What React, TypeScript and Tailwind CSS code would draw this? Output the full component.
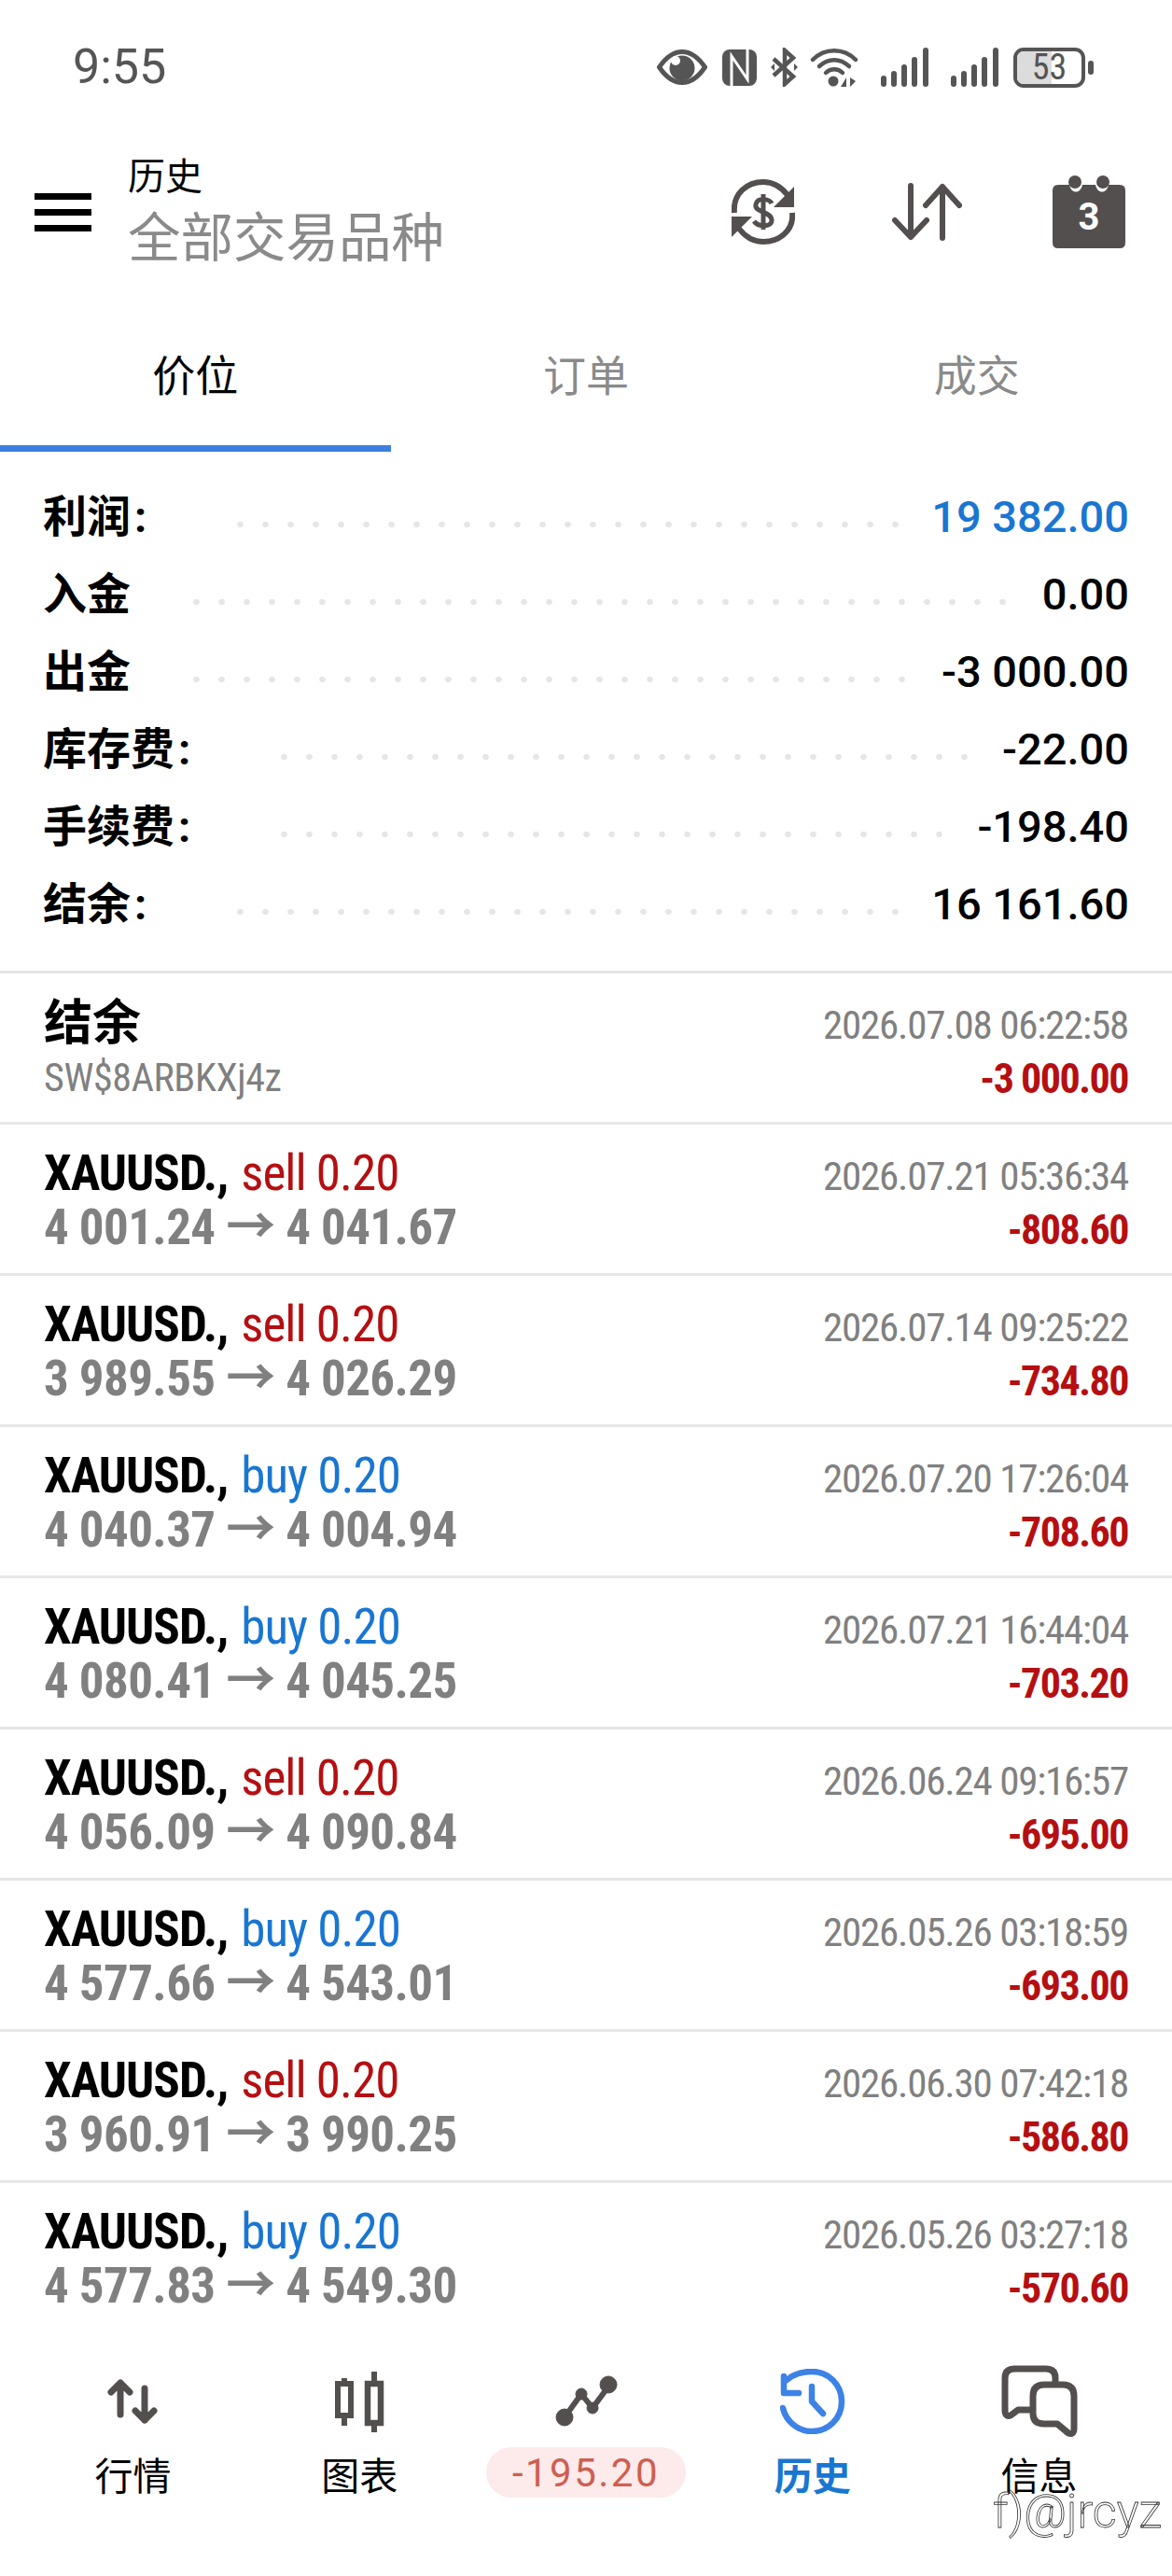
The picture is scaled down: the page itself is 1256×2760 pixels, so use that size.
import React from "react";

const cjk = "font-['Roboto','Noto_Sans_CJK_SC',sans-serif]";

const summary = [
  { l: "利润", colon: true, v: "19 382.00", c: "text-[#1976d2]", lw: "w-[198px]", dw: "w-[729px]" },
  { l: "入金", colon: false, v: "0.00", c: "text-black", lw: "w-[151px]", dw: "w-[891px]" },
  { l: "出金", colon: false, v: "-3 000.00", c: "text-black", lw: "w-[151px]", dw: "w-[783px]" },
  { l: "库存费", colon: true, v: "-22.00", c: "text-black", lw: "w-[245px]", dw: "w-[756px]" },
  { l: "手续费", colon: true, v: "-198.40", c: "text-black", lw: "w-[245px]", dw: "w-[729px]" },
  { l: "结余", colon: true, v: "16 161.60", c: "text-black", lw: "w-[198px]", dw: "w-[729px]" },
];

const trades = [
  ["sell", "4 001.24", "4 041.67", "2026.07.21 05:36:34", "-808.60"],
  ["sell", "3 989.55", "4 026.29", "2026.07.14 09:25:22", "-734.80"],
  ["buy", "4 040.37", "4 004.94", "2026.07.20 17:26:04", "-708.60"],
  ["buy", "4 080.41", "4 045.25", "2026.07.21 16:44:04", "-703.20"],
  ["sell", "4 056.09", "4 090.84", "2026.06.24 09:16:57", "-695.00"],
  ["buy", "4 577.66", "4 543.01", "2026.05.26 03:18:59", "-693.00"],
  ["sell", "3 960.91", "3 990.25", "2026.06.30 07:42:18", "-586.80"],
  ["buy", "4 577.83", "4 549.30", "2026.05.26 03:27:18", "-570.60"],
];

function Bars() {
  return (
    <svg width="52" height="42" viewBox="0 0 52 42" fill="#555">
      <rect x="0" y="30" width="6" height="12" rx="3" />
      <rect x="11" y="25" width="6" height="17" rx="3" />
      <rect x="22" y="18" width="6" height="24" rx="3" />
      <rect x="33" y="10" width="6" height="32" rx="3" />
      <rect x="45" y="0" width="6" height="42" rx="3" />
    </svg>
  );
}

function StatusBar() {
  return (
    <div className="h-[144px] flex items-center pl-[78px] pr-[84px] justify-between text-[#555]">
      <span className="text-[52px] leading-none font-['Roboto',sans-serif]">9:55</span>
      <div className="flex items-center">
        <svg width="54" height="38" viewBox="0 0 54 38" className="mr-[16px]">
          <path d="M2.5 19C10 8 18 2.5 27 2.5S44 8 51.5 19C44 30 36 35.500 27 35.500S10 30 2.500 19Z" fill="none" stroke="#555" strokeWidth="5" />
          <circle cx="27" cy="20" r="13.500" fill="#555" />
          <circle cx="20" cy="12" r="5" fill="#fff" />
        </svg>
        <svg width="37" height="39" viewBox="0 0 37 39" className="mr-[15px]">
          <rect width="37" height="39" rx="8" fill="#555" />
          <path d="M10 39V7L27 32V0" fill="none" stroke="#fff" strokeWidth="3" />
        </svg>
        <svg width="29" height="42" viewBox="0 0 29 42" className="mr-[13px]" fill="none" stroke="#555" strokeWidth="4.500">
          <path d="M3 12L24 31 15 39V3l9 8L3 30" />
          <path d="M0 21l4-4v8zM29 21l-4-4v8z" fill="#555" stroke="none" />
        </svg>
        <svg width="52" height="41" viewBox="0 0 52 41" className="mr-[24px]" fill="none" stroke="#555" strokeWidth="4.500" strokeLinecap="round">
          <path d="M3 12C16 -1 36 -1 49 12" />
          <path d="M10 19C20 10 32 10 42 19" />
          <path d="M17 26C22 21 30 21 35 26" />
          <circle cx="25" cy="35" r="5.500" fill="#555" stroke="none" />
          <path d="M39 31v10h-6zM43 31v10l6-6z" fill="#555" stroke="none" />
        </svg>
        <div className="mr-[23px] h-[42px]"><Bars /></div>
        <div className="mr-[15px] h-[42px]"><Bars /></div>
        <div className="relative w-[77px] h-[43px] rounded-[11px] border-[4px] border-[#555] overflow-hidden flex items-center justify-center">
          <div className="absolute left-0 top-0 bottom-0 w-[53%] bg-[#dcdcdc]" />
          <span className="relative text-[38px] leading-[30px] [font-stretch:85%] font-['Roboto',sans-serif]">53</span>
        </div>
        <div className="ml-[3px] w-[6px] h-[15px] rounded-full bg-[#555]" />
      </div>
    </div>
  );
}

function Header() {
  return (
    <div className="h-[178px] pb-[12px] flex items-center pl-[37px] text-black">
      <div className="w-[61px] flex flex-col gap-[10px]">
        <div className="h-[7px] bg-black" />
        <div className="h-[7px] bg-black" />
        <div className="h-[7px] bg-black" />
      </div>
      <div className="ml-[39px] flex flex-col pt-[2px]">
        <span className="text-[40px] leading-[44px] font-['Noto_Sans_CJK_SC',sans-serif] font-normal">历史</span>
        <span className="text-[56.5px] leading-[84px] text-[#8a8a8a] font-['Noto_Sans_CJK_SC',sans-serif] font-normal">全部交易品种</span>
      </div>
      <div className="ml-auto flex items-center pr-[50px]">
        <svg width="68" height="70" viewBox="0 0 68 70" fill="none" stroke="#544f4f" strokeWidth="6">
          <path d="M3 36C1 15 17 3 34 3c11 0 19 5 26 14" />
          <path d="M65 36C67 55 51 67 34 67c-11 0-19-5-26-14" />
          <path d="M67 8v22H45z" fill="#544f4f" stroke="none" />
          <path d="M0 62V40h22z" fill="#544f4f" stroke="none" />
          <path d="M43 26c-2-5-15-7-17 1-2 9 17 7 17 17 0 8-15 7-19 1M34 16v38" strokeWidth="5" />
        </svg>
        <svg width="75" height="62" viewBox="0 0 75 62" className="ml-[104px]" fill="none" stroke="#544f4f" strokeWidth="6" strokeLinecap="round" strokeLinejoin="round">
          <path d="M20 3V58M3 40L20 58 37 40" />
          <path d="M54 59V4M36 24L54 4 72 24" />
        </svg>
        <div className="ml-[97px] relative w-[78px] h-[78px]">
          <svg width="78" height="78" viewBox="0 0 78 78">
            <path d="M6 10H18C20 20 30 20 32 10H46C48 20 58 20 60 10H72Q78 10 78 16V72Q78 78 72 78H6Q0 78 0 72V16Q0 10 6 10Z" fill="#544f4f" />
            <circle cx="24" cy="7" r="7" fill="#544f4f" />
            <circle cx="54" cy="7" r="7" fill="#544f4f" />
          </svg>
          <span className="absolute inset-x-0 top-[20px] text-center text-white text-[40px] leading-[50px] font-bold font-['Roboto',sans-serif]">3</span>
        </div>
      </div>
    </div>
  );
}

function Tabs() {
  return (
    <div className="grid grid-cols-3 h-[162px] text-[46px] font-['Noto_Sans_CJK_SC',sans-serif] font-normal">
      <div className="flex items-center justify-center text-black border-b-[7px] border-[#3d7fe0]">价位</div>
      <div className="flex items-center justify-center text-[#8a8a8a] pb-[7px]">订单</div>
      <div className="flex items-center justify-center text-[#8a8a8a] pb-[7px]">成交</div>
    </div>
  );
}

function Summary() {
  return (
    <div className="pt-[28px] pb-[30px] pl-[46px] pr-[46px]">
      {summary.map((s) => (
        <div key={s.l} className="h-[83px] flex items-center">
          <span className={`${s.lw} shrink-0 text-[47px] leading-none font-bold text-black font-['Roboto','Noto_Sans_CJK_SC',sans-serif]`}>
            {s.l}
            {s.colon && <span className="ml-[4px]">:</span>}
          </span>
          <div className={`${s.dw} h-[12px] mt-[16px] bg-[radial-gradient(circle,#e6e6e6_3px,transparent_3.5px)] bg-[length:27px_12px] bg-repeat-x`} />
          <span className={`ml-auto text-[47px] leading-none font-medium font-['Roboto',sans-serif] ${s.c}`}>{s.v}</span>
        </div>
      ))}
    </div>
  );
}

function Row({ left1, left2, time, amount }: { left1: React.ReactNode; left2: React.ReactNode; time: string; amount: string }) {
  return (
    <div className="h-[162px] border-t-[3px] border-[#e6e6e6] pl-[47px] pr-[47px] pt-[23px] flex justify-between font-['Roboto','Noto_Sans_CJK_SC',sans-serif]">
      <div className="flex flex-col pt-[1px]">
        <div className="h-[58px] flex items-center whitespace-pre">{left1}</div>
        <div className="h-[58px] flex items-center whitespace-pre">{left2}</div>
      </div>
      <div className="flex flex-col items-end pt-[3px]">
        <div className="h-[58px] flex items-center text-[43px] text-[#808080] [font-stretch:75%] tracking-[-1.2px]">{time}</div>
        <div className="h-[58px] flex items-center text-[44px] font-bold text-[#b50f12] [font-stretch:75%] tracking-[-1.5px]">{amount}</div>
      </div>
    </div>
  );
}

function Item({ label, active, children }: { label?: string; active?: boolean; children: React.ReactNode }) {
  return (
    <div className="flex flex-col items-center">
      <div className="h-[80px] flex items-center justify-center">{children}</div>
      {label && (
        <span className={`mt-[10px] text-[41px] leading-[54px] font-['Noto_Sans_CJK_SC',sans-serif] ${active ? "text-[#1976d2] font-bold" : "text-black font-normal"}`}>{label}</span>
      )}
      {!label && (
        <span className="mt-[9px] w-[214px] h-[54px] rounded-[27px] bg-[#fdeaea] flex items-center justify-center text-[42px] tracking-[2.5px] text-[#cd5f52] font-['Roboto',sans-serif]">-195.20</span>
      )}
    </div>
  );
}

function Nav() {
  const s = "#544f4f";
  return (
    <div className="grid grid-cols-5 px-[21px] pt-[35px]">
      <Item label="行情">
        <svg width="54" height="48" viewBox="0 0 54 48" fill="none" stroke={s} strokeWidth="7" strokeLinecap="round" strokeLinejoin="round">
          <path d="M14 38V4M4 14L14 4 24 14" />
          <path d="M40 10V44M30 34L40 44 50 34" />
        </svg>
      </Item>
      <Item label="图表">
        <svg width="53" height="65" viewBox="0 0 53 65" fill="none" stroke={s} strokeWidth="6">
          <path d="M10 7V13M10 47V58M42 0V13M42 55V65" />
          <rect x="3" y="13" width="14" height="34" />
          <rect x="35" y="13" width="14" height="42" strokeWidth="6.500" />
        </svg>
      </Item>
      <Item>
        <svg width="68" height="56" viewBox="0 0 68 56" fill={s} stroke={s}>
          <path d="M11 45L29 20 41 35 58 12" fill="none" strokeWidth="6" />
          <circle cx="11" cy="45" r="9" />
          <circle cx="29" cy="20" r="6" />
          <circle cx="41" cy="35" r="6" />
          <circle cx="58" cy="10" r="9" />
        </svg>
      </Item>
      <Item label="历史" active>
        <svg width="70" height="70" viewBox="0 0 70 70" fill="none" stroke="#3d82e6" strokeWidth="6.500" strokeLinecap="round" strokeLinejoin="round">
          <path d="M7 12C14 6 23 3 34 3C52 3 66 17 66 35S52 67 34 67C18 67 6 55 3 42" />
          <path d="M4 8V26H20" />
          <path d="M34 19V35L46 48" />
        </svg>
      </Item>
      <Item label="信息">
        <svg width="82" height="78" viewBox="0 0 82 78" fill="none" stroke={s} strokeWidth="7" strokeLinejoin="round">
          <path d="M58 21V14Q58 4 48 4H14Q4 4 4 14V48Q4 56 10 54L18 48H34" />
          <path d="M46 21H66Q78 21 78 33V68Q78 75 72 73L60 63H46Q34 63 34 52V33Q34 21 46 21Z" />
        </svg>
      </Item>
    </div>
  );
}

export default function App() {
  return (
    <div className={`relative w-[1256px] h-[2760px] overflow-hidden bg-white ${cjk}`}>
      <StatusBar />
      <Header />
      <Tabs />
      <Summary />
      <Row
        left1={<span className="-mt-[8px] text-[52px] font-bold text-black leading-none font-['Noto_Sans_CJK_SC',sans-serif]">结余</span>}
        left2={<span className="text-[42px] text-[#808080] [font-stretch:75%] tracking-[-0.4px]">SW$8ARBKXj4z</span>}
        time="2026.07.08 06:22:58"
        amount="-3 000.00"
      />
      {trades.map((t, i) => (
        <Row
          key={i}
          left1={
            <span className="text-[53px] [font-stretch:75%] tracking-[-1px]">
              <span className="font-bold text-black">XAUUSD., </span>
              <span className={`ml-[3px] ${t[0] === "sell" ? "text-[#b50f12]" : "text-[#1976d2]"}`}>{t[0]} 0.20</span>
            </span>
          }
          left2={<span className="text-[53px] font-bold text-[#808080] [font-stretch:77%] tracking-[-0.6px]">{t[1]} → {t[2]}</span>}
          time={t[3]}
          amount={t[4]}
        />
      ))}
      <Nav />
      <span className="absolute left-[1064px] top-[2664px] text-[50px] leading-[54px] text-white [-webkit-text-stroke:0.8px_#333] font-light font-['Roboto',sans-serif] whitespace-pre">f)@jrcyz</span>
    </div>
  );
}
